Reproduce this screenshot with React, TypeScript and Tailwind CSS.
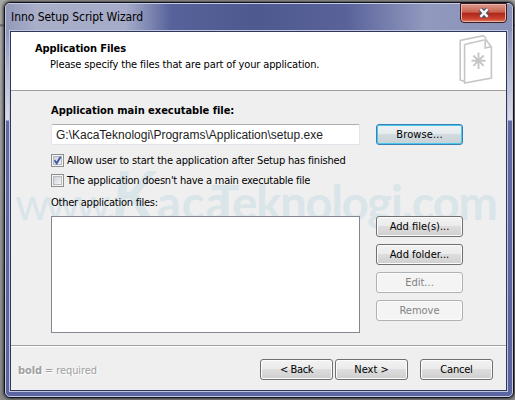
import React from "react";

type BtnProps = { label: string; w: string; kind?: "normal" | "focus" | "disabled"; ls?: string };

function Button({ label, w, kind = "normal", ls = "" }: BtnProps) {
  const look =
    kind === "focus"
      ? "border-[#3c7fb1] shadow-[inset_0_0_0_1px_#48c8ef] bg-[linear-gradient(#f0f3f4_0%,#e3e9ec_48%,#d2dbdf_50%,#c8d2d6_100%)] text-black"
      : kind === "disabled"
        ? "border-[#adb2b5] shadow-[inset_0_0_0_1px_#fbfbfb] bg-[#f4f4f4] text-[#838383]"
        : "border-[#707070] shadow-[inset_0_0_0_1px_#fbfbfb] bg-[linear-gradient(#f2f2f2_0%,#ebebeb_48%,#dddddd_50%,#cfcfcf_100%)] text-black";
  return (
    <button className={`flex h-[21px] items-center justify-center rounded-[3px] border whitespace-nowrap ${w} ${look}`}>
      <span className={ls}>{label}</span>
    </button>
  );
}

function Check({ label, on, ls }: { label: string; on?: boolean; ls: string }) {
  return (
    <label className="flex h-[13px] items-center gap-[3px]">
      <span className="flex size-[13px] shrink-0 border border-[#8e8f8f] bg-[#f4f4f4] p-px">
        <span className="flex size-[9px] border border-[#b4bbc2] bg-[linear-gradient(135deg,#cbcfd5,#f6f6f6)]">
          {on && (
            <svg width="9" height="9" viewBox="0 0 9 9" className="-m-px shrink-0">
              <path d="M1.5 4.3 3.7 7.2 7.6 0.8" fill="none" stroke="#4459a0" strokeWidth="1.9" />
            </svg>
          )}
        </span>
      </span>
      <span className={`whitespace-nowrap ${ls}`}>{label}</span>
    </label>
  );
}

function FilesIcon() {
  return (
    <svg width="36" height="54" viewBox="0 0 36 54" fill="none" stroke="#c6c6c6" strokeWidth="1.6">
      <path d="M7.5 49.5 3.2 48V8.5L26 3.6l3 2.4M7.6 12.5 27 8M7.6 12.5V51L34.4 46V15L28 6.5M28.2 7.5V16l6-1.4" />
      <path d="M21.5 20.5v16.5M14.5 28.7h14M16.3 23.5l10.4 10.4M26.7 23.5 16.3 33.9" strokeWidth="1.9" />
    </svg>
  );
}

export default function App() {
  return (
    <div className="relative h-[400px] w-[515px] overflow-hidden bg-[linear-gradient(#a6a8a4_0px,#a6a8a4_24px,#555_25px,#aaa_27px,#8a8a8a_100%)] pt-[2px] pl-[4px] font-['DejaVu_Sans_Condensed','DejaVu_Sans',sans-serif] text-[11px] leading-[14px] text-black [font-stretch:condensed]">
      <div className="h-[396px] w-[510px] rounded-[6px] border border-[#10131f] bg-[linear-gradient(#a8adc9_0px,#8f96bd_28px,#b5bbd3_70px,#d8dbe9_117px,#616ba3_118px,#5964a0_100%)] shadow-[0_0_3px_1px_#333]">
        <div className="flex h-full flex-col rounded-[5px] border border-[#c7cbdf] px-[5px]">
          <header className="-mx-[5px] flex h-[27px] shrink-0 items-start justify-between rounded-t-[4px] bg-[linear-gradient(90deg,#9399b9_0px,#a9aec9_30px,#a5abc8_120px,#7b84b0_145px,#57629a_165px,#4e5990_250px,#59639a_340px,#9299bf_420px,#8991b8_100%)] px-[5px]">
            <h1 className="pt-[6px] text-[12px] whitespace-nowrap tracking-[-0.05px]">Inno Setup Script Wizard</h1>
            <div className="-mt-px flex h-[20px] w-[47px] items-center justify-center rounded-b-[4px] border border-[#3e1b20] bg-[linear-gradient(#dc9c8e_0%,#c9604f_46%,#ad2518_50%,#c8402c_80%,#df7a60_100%)] shadow-[inset_0_0_0_1px_#e8b5a9]">
              <svg width="14" height="12" viewBox="0 0 14 12">
                <path d="M3.4 2.2 10.6 9.8M10.6 2.2 3.4 9.8" stroke="#4b4b5e" strokeWidth="4.6" />
                <path d="M3.4 2.2 10.6 9.8M10.6 2.2 3.4 9.8" stroke="#f4f4f4" strokeWidth="2.6" />
              </svg>
            </div>
          </header>
          <main className="-ml-px flex h-[360px] w-[497px] shrink-0 flex-col border border-[#30365c] bg-[#efefef] shadow-[0_0_0_1px_#bfc4dd]">
            <section className="flex h-[59px] shrink-0 justify-between border-b border-[#a0a0a0] bg-white pr-[13px] pl-[24px]">
              <div className="pt-[10px]">
                <h2 className="font-bold tracking-[-0.1px]">Application Files</h2>
                <p className="pt-[2px] pl-[15px] tracking-[-0.14px] whitespace-nowrap">Please specify the files that are part of your application.</p>
              </div>
              <FilesIcon />
            </section>
            <section className="relative flex h-[255px] shrink-0 gap-[16px] border-b border-[#a0a0a0] pl-[40px]">
              <div aria-hidden="true" className="absolute top-[68px] left-[4px] flex items-baseline font-[Lato] text-[47px] leading-[72px] font-bold whitespace-nowrap text-[#dae5ea]">
                <span className="w-[97px] text-[44px] font-normal tracking-[-4px]">www.</span>
                <span className="w-[45px] text-[66px] italic">K</span>
                <span className="w-[54px] tracking-[1px]">aca</span>
                <span className="tracking-[-1.2px]">Teknologi.com</span>
              </div>
              <div className="relative flex w-[309px] flex-col">
                <h3 className="pt-[13px] font-bold tracking-[-0.02px] whitespace-nowrap">Application main executable file:</h3>
                <div className="mt-[6px] flex h-[21px] shrink-0 items-center rounded-[2px] border border-[#e2e3ea] border-t-[#abadb3] bg-white pl-[4px] font-['Liberation_Sans',sans-serif] text-[12px] whitespace-nowrap text-[#222]">G:\KacaTeknologi\Programs\Application\setup.exe</div>
                <div className="flex flex-col gap-[7px] pt-[9px]">
                  <Check label="Allow user to start the application after Setup has finished" on ls="tracking-[-0.17px]" />
                  <Check label="The application doesn't have a main executable file" ls="tracking-[-0.25px]" />
                </div>
                <p className="pt-[9px] tracking-[-0.24px]">Other application files:</p>
                <div className="mt-[6px] h-[117px] border border-[#828790] bg-white" />
              </div>
              <div className="relative flex flex-col pt-[33px]">
                <Button label="Browse..." w="w-[87px]" kind="focus" ls="tracking-[0.1px]" />
                <div className="mt-[71px] flex flex-col gap-[7px]">
                  <Button label="Add file(s)..." w="w-[87px]" />
                  <Button label="Add folder..." w="w-[87px]" />
                  <Button label="Edit..." w="w-[87px]" kind="disabled" />
                  <Button label="Remove" w="w-[87px]" kind="disabled" />
                </div>
              </div>
            </section>
            <footer className="flex h-[44px] items-start border-t border-white pt-[12px] pl-[7px]">
              <p className="w-[242px] pt-[5px] text-[#a0a0a0] tracking-[-0.1px] [text-shadow:1px_1px_#fff]"><b>bold</b> = required</p>
              <Button label="< Back" w="w-[73px]" ls="tracking-[-0.4px]" />
              <div className="w-[2px]" />
              <Button label="Next >" w="w-[73px]" />
              <div className="w-[12px]" />
              <Button label="Cancel" w="w-[73px]" ls="tracking-[-0.2px]" />
            </footer>
          </main>
        </div>
      </div>
    </div>
  );
}
